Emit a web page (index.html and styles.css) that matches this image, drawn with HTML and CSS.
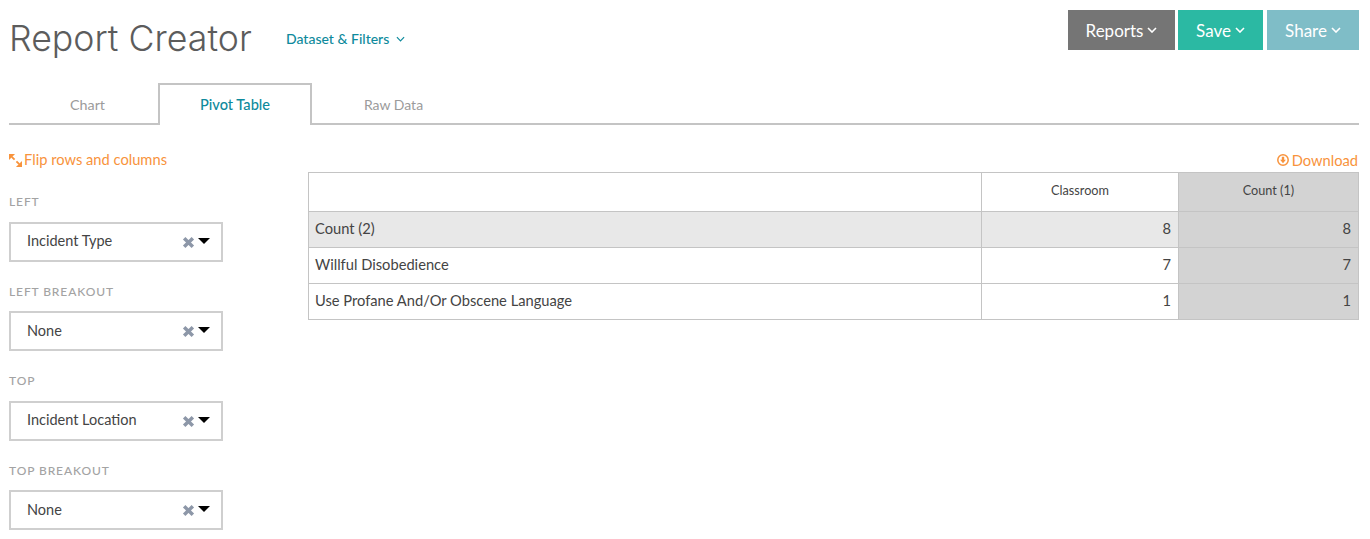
FILE: index.html
```html
<!DOCTYPE html>
<html lang="en">
<head>
<meta charset="utf-8">
<title>Report Creator</title>
<link rel="stylesheet" href="styles.css">
</head>
<body>
<div class="page">
  <header class="header">
    <div class="header-left">
      <h1 class="title">Report Creator</h1>
      <a class="dataset">Dataset &amp; Filters
        <svg class="chev-small" viewBox="0 0 10 6"><path d="M1 1l4 4 4-4" fill="none" stroke="currentColor" stroke-width="1.3"/></svg>
      </a>
    </div>
    <div class="actions">
      <button class="btn btn-reports">Reports <svg class="chev" viewBox="0 0 10 6"><path d="M1 1l4 4 4-4" fill="none" stroke="currentColor" stroke-width="1.6"/></svg></button>
      <button class="btn btn-save">Save <svg class="chev" viewBox="0 0 10 6"><path d="M1 1l4 4 4-4" fill="none" stroke="currentColor" stroke-width="1.6"/></svg></button>
      <button class="btn btn-share">Share <svg class="chev" viewBox="0 0 10 6"><path d="M1 1l4 4 4-4" fill="none" stroke="currentColor" stroke-width="1.6"/></svg></button>
    </div>
  </header>

  <nav class="tabs">
    <a class="tab tab-chart">Chart</a>
    <a class="tab tab-active">Pivot Table</a>
    <a class="tab tab-raw">Raw Data</a>
  </nav>

  <div class="content">
    <aside class="sidebar">
      <a class="flip">
        <svg class="flip-icon" viewBox="0 0 14 14"><path d="M3 3l3 3M8 8l3 3" stroke="currentColor" stroke-width="2" fill="none"/><path d="M0 0h6.5L0 6.500zM14 14H7.500l6.500-6.500z" fill="currentColor"/></svg>Flip rows and columns
      </a>
      <div class="field">
        <div class="field-label">LEFT</div>
        <div class="select"><span class="select-value">Incident Type</span>
          <svg class="clear" viewBox="0 0 12 12"><path d="M2 2l8 8M10 2l-8 8" stroke="currentColor" stroke-width="3.2" fill="none"/></svg><span class="caret"></span></div>
      </div>
      <div class="field">
        <div class="field-label">LEFT BREAKOUT</div>
        <div class="select"><span class="select-value">None</span>
          <svg class="clear" viewBox="0 0 12 12"><path d="M2 2l8 8M10 2l-8 8" stroke="currentColor" stroke-width="3.2" fill="none"/></svg><span class="caret"></span></div>
      </div>
      <div class="field">
        <div class="field-label">TOP</div>
        <div class="select"><span class="select-value">Incident Location</span>
          <svg class="clear" viewBox="0 0 12 12"><path d="M2 2l8 8M10 2l-8 8" stroke="currentColor" stroke-width="3.2" fill="none"/></svg><span class="caret"></span></div>
      </div>
      <div class="field">
        <div class="field-label">TOP BREAKOUT</div>
        <div class="select"><span class="select-value">None</span>
          <svg class="clear" viewBox="0 0 12 12"><path d="M2 2l8 8M10 2l-8 8" stroke="currentColor" stroke-width="3.2" fill="none"/></svg><span class="caret"></span></div>
      </div>
    </aside>

    <section class="report">
      <div class="download-row">
        <a class="download">
          <svg class="download-icon" viewBox="0 0 12 12"><circle cx="6" cy="6" r="5.200" fill="none" stroke="currentColor" stroke-width="1.500"/><path d="M4.800 2.800h2.400v3h1.700L6 9.200 3.100 5.800h1.700z" fill="currentColor"/></svg>Download
        </a>
      </div>
      <table class="pivot">
        <colgroup><col class="col-a"><col class="col-b"><col class="col-c"></colgroup>
        <thead>
          <tr><th></th><th>Classroom</th><th class="total-col">Count (1)</th></tr>
        </thead>
        <tbody>
          <tr class="total-row"><td>Count (2)</td><td class="num">8</td><td class="num total-col">8</td></tr>
          <tr><td>Willful Disobedience</td><td class="num">7</td><td class="num total-col">7</td></tr>
          <tr><td>Use Profane And/Or Obscene Language</td><td class="num">1</td><td class="num total-col">1</td></tr>
        </tbody>
      </table>
    </section>
  </div>
</div>
</body>
</html>
```
FILE: styles.css
```css
* { box-sizing: border-box; }
html, body { margin: 0; padding: 0; background: #fff; }
body { font-family: "Lato", "Liberation Sans", sans-serif; color: #444; overflow: hidden; }
.page { padding: 10px 11px 0 9px; height: 539px; }

.header { display: flex; justify-content: space-between; align-items: flex-start; height: 73px; }
.header-left { display: flex; align-items: center; height: 54px; }
.title { margin: 2px 0 0; font-family: "Inter", "Liberation Sans", sans-serif; font-size: 35.700px; font-weight: 300; color: #5c5c5c; line-height: 54px; width: 277px; }
.dataset { display: flex; align-items: center; gap: 7px; font-size: 14px; font-weight: 500; color: #0e8a9c; margin-top: 3px; }
.chev-small { width: 9px; height: 6px; }

.actions { display: flex; }
.btn { border: 0; height: 40px; color: #fff; font-family: inherit; font-size: 17px; display: flex; align-items: center; justify-content: center; gap: 4px; padding: 0; }
.chev { width: 10px; height: 6px; }
.btn-reports { width: 107px; background: #757575; margin-right: 3px; }
.btn-save { width: 85px; background: #2bb9a3; margin-right: 4px; }
.btn-share { width: 92px; background: #7fbdc7; }

.tabs { display: flex; height: 42px; border-bottom: 2px solid #c4c4c4; font-size: 14px; }
.tab { display: flex; align-items: center; justify-content: center; height: 42px; color: #9b9b9b; }
.tab-chart { width: 149px; padding-left: 8px; font-size: 14.300px; }
.tab-active { width: 154px; color: #0e8a9c; font-size: 14.600px; font-weight: 500; border: 2px solid #c4c4c4; border-bottom: 0; background: #fff; padding-bottom: 2px; }
.tab-raw { width: 163px; }

.content { display: grid; grid-template-columns: 214px 1fr; column-gap: 85px; }

.sidebar { display: flex; flex-direction: column; }
.flip { display: flex; align-items: center; height: 20px; margin-top: 24px; color: #f8933c; font-size: 14.700px; }
.flip-icon { width: 13px; height: 13px; margin-right: 2px; margin-top: 2px; }
.field { display: flex; flex-direction: column; }
.field-label { height: 18px; margin-top: 21px; margin-bottom: 10.500px; font-size: 12px; line-height: 18px; letter-spacing: 0.900px; color: #a3a3a3; font-weight: 500; }
.field:first-of-type .field-label { margin-top: 23.900px; margin-bottom: 11px; }
.select { display: flex; align-items: center; height: 40px; border: 2px solid #cfcfcf; padding: 0 11px 2px 16px; font-size: 14.500px; color: #444; }
.select-value { flex: 1; }
.clear { width: 13px; height: 13px; color: #8d97a8; margin-right: 3px; margin-top: 3px; }
.caret { width: 0; height: 0; border-left: 6.500px solid transparent; border-right: 6.500px solid transparent; border-top: 6.500px solid #000; }

.download-row { display: flex; justify-content: flex-end; height: 20px; margin-top: 24px; margin-bottom: 3px; }
.download { display: flex; align-items: center; color: #f8933c; font-size: 14.700px; padding: 1px 1px 0 0; }
.download-icon { width: 12px; height: 12px; margin-right: 3px; }

.pivot { width: 1051px; border-collapse: collapse; table-layout: fixed; font-size: 14.700px; color: #444; }
.col-b { width: 197px; }
.col-c { width: 180px; }
.pivot th, .pivot td { border: 1px solid #c4c4c4; padding: 0 6px; }
.pivot th { height: 39px; font-size: 12.700px; font-weight: 400; text-align: center; padding-bottom: 4px; }
.pivot td { height: 36px; padding-bottom: 3px; }
.pivot .num { text-align: right; padding-right: 7px; }
.total-row td { background: #e8e8e8; }
.pivot .total-col { background: #d3d3d3; }
```
